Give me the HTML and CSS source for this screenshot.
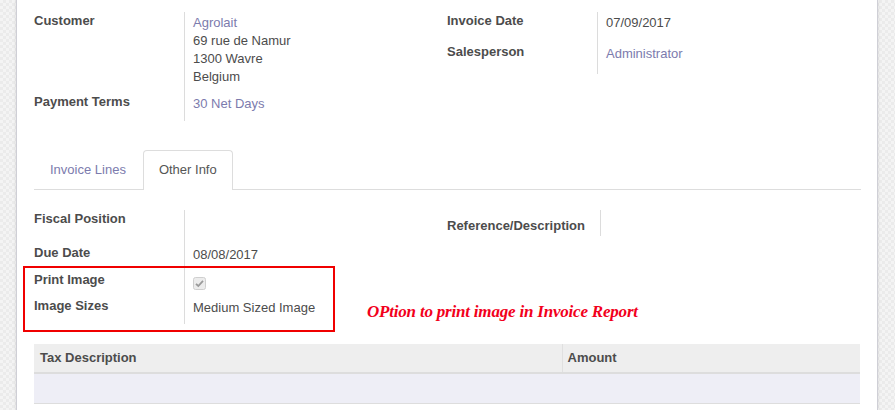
FILE: index.html
```html
<!DOCTYPE html>
<html lang="en">

<head>
    <meta charset="UTF-8">
    <title>Customer Invoice</title>
    <link rel="stylesheet" href="styles.css">
</head>

<body>
    <div class="sheet">
        <div class="group">
            <div class="col">
                <div class="row r-customer">
                    <div class="label">Customer</div>
                    <div class="value">
                        <a class="link">Agrolait</a><br>
                        69 rue de Namur<br>
                        1300 Wavre<br>
                        Belgium
                    </div>
                </div>
                <div class="row r-terms">
                    <div class="label">Payment Terms</div>
                    <div class="value"><a class="link">30 Net Days</a></div>
                </div>
            </div>
            <div class="col">
                <div class="row r-date">
                    <div class="label">Invoice Date</div>
                    <div class="value">07/09/2017</div>
                </div>
                <div class="row r-sales">
                    <div class="label">Salesperson</div>
                    <div class="value"><a class="link">Administrator</a></div>
                </div>
            </div>
        </div>

        <ul class="tabs">
            <li class="tab">Invoice Lines</li>
            <li class="tab active">Other Info</li>
        </ul>

        <div class="group other">
            <div class="col">
                <div class="row r-fiscal">
                    <div class="label">Fiscal Position</div>
                    <div class="value"></div>
                </div>
                <div class="row r-due">
                    <div class="label">Due Date</div>
                    <div class="value">08/08/2017</div>
                </div>
                <div class="row r-print">
                    <div class="label">Print Image</div>
                    <div class="value">
                        <svg class="check" width="13" height="13" viewBox="0 0 13 13">
                            <rect x="0.5" y="0.5" width="12" height="12" rx="2" fill="#ececec" stroke="#cfcfcf"/>
                            <path d="M3 6.8 L5.3 9 L10 3.8" fill="none" stroke="#9a9a9a" stroke-width="1.8"/>
                        </svg>
                    </div>
                </div>
                <div class="row r-sizes">
                    <div class="label">Image Sizes</div>
                    <div class="value">Medium Sized Image</div>
                </div>
            </div>
            <div class="col">
                <div class="row r-ref">
                    <div class="label">Reference/Description</div>
                    <div class="value"></div>
                </div>
            </div>

            <div class="highlight"></div>
            <div class="note">OPtion to print image in Invoice Report</div>
        </div>

        <table class="taxes">
            <thead>
                <tr>
                    <th class="desc">Tax Description</th>
                    <th>Amount</th>
                </tr>
            </thead>
            <tbody>
                <tr>
                    <td></td>
                    <td></td>
                </tr>
            </tbody>
        </table>
    </div>
</body>

</html>
```

FILE: styles.css
```css
* {
    margin: 0;
    padding: 0;
    box-sizing: border-box;
}

body {
    font-family: "Liberation Sans", Arial, sans-serif;
    font-size: 13px;
    line-height: 18px;
    color: #4c4c4c;
    background-color: #f4f4f4;
    background-image:
        linear-gradient(45deg, #ebebeb 25%, transparent 25%, transparent 75%, #ebebeb 75%),
        linear-gradient(45deg, #ebebeb 25%, transparent 25%, transparent 75%, #ebebeb 75%);
    background-size: 6px 6px;
    background-position: 0 0, 3px 3px;
    height: 410px;
    overflow: hidden;
}

.sheet {
    margin-left: 16px;
    width: 862px;
    height: 410px;
    background: #fff;
    border-left: 1px solid #cfcfd6;
    border-right: 1px solid #cfcfd6;
    box-shadow: 0 0 3px rgba(0, 0, 0, 0.12);
    padding: 12px 16px 0 17px;
}

.group {
    display: grid;
    grid-template-columns: 413px 413px;
    position: relative;
}

.row {
    display: flex;
}

.label {
    width: 150px;
    font-weight: bold;
    flex-shrink: 0;
}

.value {
    border-left: 1px solid #dcdcdc;
    padding: 2px 0 0 8px;
    flex: 1;
}

.link {
    color: #7c7bad;
    text-decoration: none;
}

.r-customer .value { padding-bottom: 7px; }
.r-terms .value { padding-bottom: 8px; }
.r-date .value { padding-bottom: 11px; }
.r-sales .value { padding-bottom: 11px; }

/* tabs */
.tabs {
    list-style: none;
    display: flex;
    margin-top: 29px;
    border-bottom: 1px solid #dddddd;
    height: 40px;
}

.tab {
    padding: 10px 17px 10px 15px;
    color: #7c7bad;
    border: 1px solid transparent;
    border-bottom: none;
    height: 40px;
}

.active {
    color: #555;
    padding: 10px 15px;
    border-color: #dddddd;
    border-radius: 4px 4px 0 0;
    background: #fff;
    margin-left: -1px;
    height: 40px;
}

/* other info */
.other {
    margin-top: 20px;
}

.r-fiscal .value { height: 34px; }
.r-due .value { height: 27px; }
.r-print .value { height: 26px; padding-top: 6px; }
.r-sizes .value { height: 27px; }

.check {
    display: block;
}

.r-ref .label {
    width: 153px;
    padding-top: 7px;
}

.r-ref .value {
    height: 26px;
}

.highlight {
    position: absolute;
    left: -11px;
    top: 56px;
    width: 312px;
    height: 66px;
    border: 2px solid #f00000;
}

.note {
    position: absolute;
    left: 333px;
    top: 93px;
    font-family: "Liberation Serif", serif;
    font-style: italic;
    font-weight: bold;
    font-size: 17px;
    color: #f2001b;
    letter-spacing: -0.2px;
}

/* taxes table */
.taxes {
    margin-top: 20px;
    width: 826px;
    border-collapse: collapse;
}

.taxes th {
    text-align: left;
    background: #eeeeee;
    height: 29px;
    padding: 0 5px 0 5px;
    border-bottom: 2px solid #dddddd;
    font-weight: bold;
}

.taxes th.desc {
    width: 528px;
    padding-left: 6px;
    border-right: 1px solid #e0e0e0;
}

.taxes td {
    background: #eeeef6;
    height: 30px;
    border-bottom: 1px solid #dddddd;
}
```
